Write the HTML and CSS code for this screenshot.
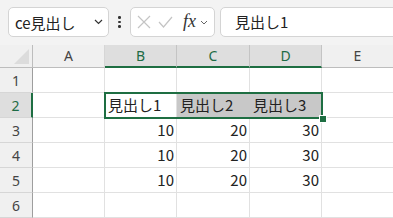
FILE: index.html
```html
<!DOCTYPE html>
<html lang="ja">
<head>
<meta charset="utf-8">
<link rel="stylesheet" href="styles.css">
</head>
<body>
<div class="app">
  <div class="toolbar">
    <div class="namebox">
      <span class="nametext">ce見出し</span>
      <svg class="chev" width="9" height="6" viewBox="0 0 9 6"><path d="M1 1 L4.5 4.5 L8 1" fill="none" stroke="#333" stroke-width="1.2"/></svg>
    </div>
    <div class="dots"><span></span><span></span><span></span></div>
    <div class="fxbox">
      <svg class="ico" width="14" height="14" viewBox="0 0 14 14"><path d="M1 1 L13 13 M13 1 L1 13" stroke="#c4c4c4" stroke-width="1.2" fill="none"/></svg>
      <svg class="ico" width="15" height="12" viewBox="0 0 15 12"><path d="M1 6 L5.5 11 L14 1" stroke="#c4c4c4" stroke-width="1.2" fill="none"/></svg>
      <span class="fx">fx</span>
      <svg class="chev2" width="8" height="5" viewBox="0 0 8 5"><path d="M1 1 L4 4 L7 1" fill="none" stroke="#666" stroke-width="1"/></svg>
    </div>
    <div class="formula">見出し1</div>
  </div>
  <div class="sheet">
    <div class="corner"><div class="tri"></div></div>
    <div class="ch">A</div>
    <div class="ch sel">B</div>
    <div class="ch sel">C</div>
    <div class="ch sel">D</div>
    <div class="ch last">E</div>

    <div class="rh">1</div>
    <div class="c"></div><div class="c"></div><div class="c"></div><div class="c"></div><div class="c last"></div>

    <div class="rh rsel">2</div>
    <div class="c"></div><div class="c txt">見出し1</div><div class="c txt gray">見出し2</div><div class="c txt gray">見出し3</div><div class="c last"></div>

    <div class="rh">3</div>
    <div class="c"></div><div class="c num">10</div><div class="c num">20</div><div class="c num">30</div><div class="c last"></div>

    <div class="rh">4</div>
    <div class="c"></div><div class="c num">10</div><div class="c num">20</div><div class="c num">30</div><div class="c last"></div>

    <div class="rh">5</div>
    <div class="c"></div><div class="c num">10</div><div class="c num">20</div><div class="c num">30</div><div class="c last"></div>

    <div class="rh">6</div>
    <div class="c"></div><div class="c"></div><div class="c"></div><div class="c"></div><div class="c last"></div>

    <div class="selbox"></div>
    <div class="handle"></div>
  </div>
</div>
</body>
</html>
```
FILE: styles.css
```css
html, body {
  margin: 0;
  padding: 0;
  background: #ffffff;
}
.app {
  width: 393px;
  height: 218px;
  overflow: hidden;
  font-family: "Noto Sans CJK JP", "Noto Sans", sans-serif;
  color: #222;
}
.toolbar {
  height: 45px;
  background: #f3f3f3;
  display: flex;
  align-items: flex-start;
  padding-top: 7px;
  box-sizing: border-box;
  overflow: hidden;
}
.namebox {
  margin-left: 8px;
  width: 101px;
  height: 30px;
  box-sizing: border-box;
  background: #fff;
  border: 1px solid #d4d4d4;
  border-radius: 5px;
  display: flex;
  align-items: center;
  padding-left: 6px;
  padding-right: 5px;
  flex-shrink: 0;
}
.nametext {
  font-size: 15px;
  color: #222;
  flex: 1;
  line-height: 1;
}
.chev {
  display: block;
}
.dots {
  width: 21px;
  height: 30px;
  flex-shrink: 0;
  display: flex;
  flex-direction: column;
  align-items: center;
  justify-content: center;
  gap: 2px;
}
.dots span {
  width: 2.5px;
  height: 2.5px;
  background: #333;
  border-radius: 50%;
}
.fxbox {
  width: 85px;
  height: 30px;
  box-sizing: border-box;
  background: #fff;
  border: 1px solid #d4d4d4;
  border-radius: 5px;
  flex-shrink: 0;
  display: flex;
  align-items: center;
  padding-left: 6px;
  gap: 7px;
}
.ico {
  display: block;
}
.fx {
  font-family: "Liberation Serif", "DejaVu Serif", serif;
  font-style: italic;
  font-size: 18px;
  color: #333;
  line-height: 1;
  margin-left: 3px;
  margin-top: -2px;
}
.chev2 {
  display: block;
  margin-left: -3px;
}
.formula {
  margin-left: 5px;
  width: 200px;
  height: 30px;
  box-sizing: border-box;
  background: #fff;
  border: 1px solid #d4d4d4;
  border-radius: 5px;
  flex-shrink: 0;
  font-size: 15px;
  line-height: 28px;
  padding-left: 14px;
  color: #222;
}
.sheet {
  position: relative;
  display: grid;
  grid-template-columns: 33px 72px 72px 73px 72px 71px;
  grid-template-rows: 23px 25px 25px 25px 25px 25px 25px;
  background: #fff;
}
.corner {
  background: #f0f0f0;
  border-right: 1px solid #bdbdbd;
  border-bottom: 1px solid #bdbdbd;
  box-sizing: border-box;
  position: relative;
}
.tri {
  position: absolute;
  right: 3px;
  bottom: 3px;
  width: 0;
  height: 0;
  border-left: 15px solid transparent;
  border-bottom: 15px solid #dcdcdc;
}
.ch {
  background: #f0f0f0;
  border-right: 1px solid #d6d6d6;
  border-bottom: 1px solid #bdbdbd;
  box-sizing: border-box;
  font-size: 14px;
  color: #444;
  text-align: center;
  line-height: 22px;
  font-family: "Noto Sans", "Noto Sans CJK JP", sans-serif;
}
.ch.sel {
  background: #dedede;
  color: #1d6b45;
  border-bottom: 2px solid #1e6e42;
  border-right: 1px solid #c4c4c4;
}
.ch.last {
  border-right: none;
}
.rh {
  background: #f0f0f0;
  border-right: 1px solid #9e9e9e;
  border-bottom: 1px solid #d6d6d6;
  box-sizing: border-box;
  font-size: 14px;
  color: #444;
  text-align: center;
  line-height: 25px;
  font-family: "Noto Sans", "Noto Sans CJK JP", sans-serif;
}
.rh.rsel {
  background: #dedede;
  color: #1d6b45;
  border-right: 2px solid #1e6e42;
}
.c {
  border-right: 1px solid #e1e1e1;
  border-bottom: 1px solid #e1e1e1;
  box-sizing: border-box;
  font-size: 15px;
  line-height: 24px;
  white-space: nowrap;
  overflow: hidden;
}
.c.last {
  border-right: none;
}
.txt {
  padding-left: 3px;
}
.gray {
  background: #c8c8c8;
  border-right-color: #c8c8c8;
}
.num {
  text-align: right;
  padding-right: 2px;
}
.selbox {
  position: absolute;
  left: 104px;
  top: 47px;
  width: 219px;
  height: 27px;
  box-sizing: border-box;
  border: 2px solid #1e6e42;
  pointer-events: none;
}
.handle {
  position: absolute;
  left: 319px;
  top: 70px;
  width: 6px;
  height: 6px;
  background: #1e6e42;
  border: 1px solid #fff;
}
```
